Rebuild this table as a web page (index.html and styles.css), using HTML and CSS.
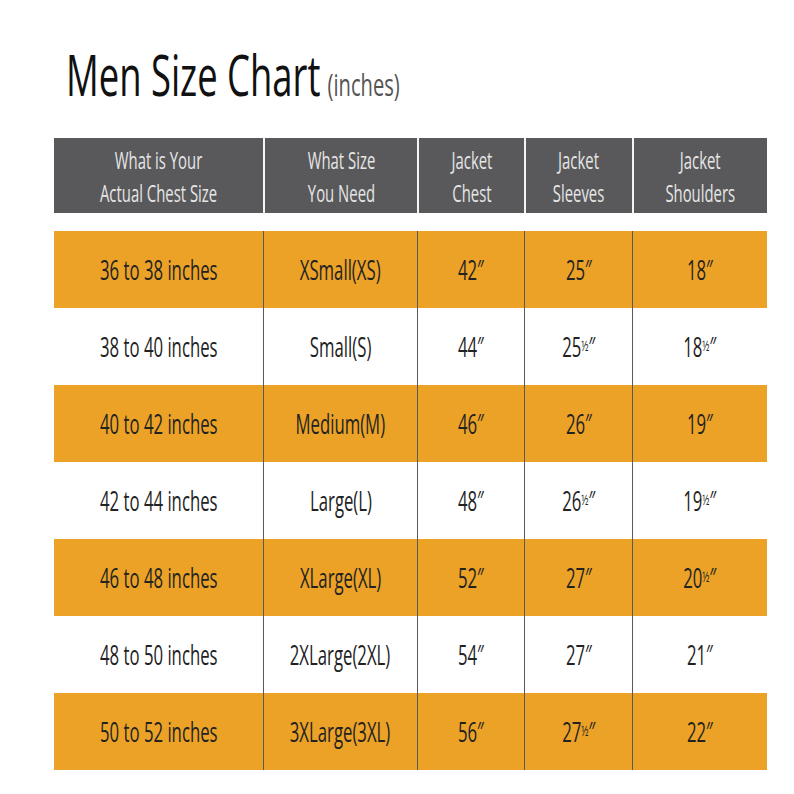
FILE: index.html
```html
<!DOCTYPE html>
<html>
<head>
<meta charset="utf-8">
<link rel="stylesheet" href="styles.css">
</head>
<body>
<div class="page">
  <h1 class="title"><span class="main">Men Size Chart</span><span class="sub">(inches)</span></h1>
  <div class="head">
    <div class="hc"><span>What is Your<br>Actual Chest Size</span></div>
    <div class="hc"><span>What Size<br>You Need</span></div>
    <div class="hc"><span>Jacket<br>Chest</span></div>
    <div class="hc"><span>Jacket<br>Sleeves</span></div>
    <div class="hc"><span>Jacket<br>Shoulders</span></div>
  </div>
  <div class="body">
    <div class="row o"><div class="c"><span>36 to 38 inches</span></div><div class="c"><span>XSmall(XS)</span></div><div class="c"><span>42″</span></div><div class="c"><span>25″</span></div><div class="c"><span>18″</span></div></div>
    <div class="row"><div class="c"><span>38 to 40 inches</span></div><div class="c"><span>Small(S)</span></div><div class="c"><span>44″</span></div><div class="c"><span>25<small>½</small>″</span></div><div class="c"><span>18<small>½</small>″</span></div></div>
    <div class="row o"><div class="c"><span>40 to 42 inches</span></div><div class="c"><span>Medium(M)</span></div><div class="c"><span>46″</span></div><div class="c"><span>26″</span></div><div class="c"><span>19″</span></div></div>
    <div class="row"><div class="c"><span>42 to 44 inches</span></div><div class="c"><span>Large(L)</span></div><div class="c"><span>48″</span></div><div class="c"><span>26<small>½</small>″</span></div><div class="c"><span>19<small>½</small>″</span></div></div>
    <div class="row o"><div class="c"><span>46 to 48 inches</span></div><div class="c"><span>XLarge(XL)</span></div><div class="c"><span>52″</span></div><div class="c"><span>27″</span></div><div class="c"><span>20<small>½</small>″</span></div></div>
    <div class="row"><div class="c"><span>48 to 50 inches</span></div><div class="c"><span>2XLarge(2XL)</span></div><div class="c"><span>54″</span></div><div class="c"><span>27″</span></div><div class="c"><span>21″</span></div></div>
    <div class="row o"><div class="c"><span>50 to 52 inches</span></div><div class="c"><span>3XLarge(3XL)</span></div><div class="c"><span>56″</span></div><div class="c"><span>27<small>½</small>″</span></div><div class="c"><span>22″</span></div></div>
  </div>
</div>
</body>
</html>
```
FILE: styles.css
```css
html, body { margin: 0; padding: 0; background: #fff; }
.page {
  width: 794px;
  height: 794px;
  padding: 44px 0 0 54px;
  box-sizing: border-box;
  font-family: "Open Sans", sans-serif;
}
.title {
  margin: 0 0 0 12px;
  height: 94px;
  font-weight: normal;
  line-height: 60px;
  white-space: nowrap;
  transform: scaleX(0.65);
  transform-origin: left center;
}
.title .main {
  display: inline-block;
  font-size: 56px;
  color: #111;
}
.title .sub {
  display: inline-block;
  margin-left: 11px;
  font-size: 31px;
  color: #555;
}
.head, .row {
  display: grid;
  grid-template-columns: 209px 154px 107px 108px 135px;
  width: 713px;
}
.head {
  background: #59595b;
  height: 75px;
  margin-bottom: 18px;
}
.hc {
  display: flex;
  align-items: center;
  justify-content: center;
  text-align: center;
  color: #e6e6e6;
  font-size: 24px;
  line-height: 33px;
  border-left: 2px solid #f4f4f4;
  white-space: nowrap;
}
.hc span { display: inline-block; transform: scaleX(0.62); }
.hc:first-child { border-left: none; }
.row { height: 77px; background: #fff; }
.row.o { background: #eca226; }
.c {
  display: flex;
  align-items: center;
  justify-content: center;
  font-size: 27px;
  color: #222;
  border-left: 1px solid #5a5a5a;
  white-space: nowrap;
}
.c span { display: inline-block; transform: scaleX(0.62); }
.c:first-child { border-left: none; }
.c small { font-size: 15px; vertical-align: 6px; }
```
